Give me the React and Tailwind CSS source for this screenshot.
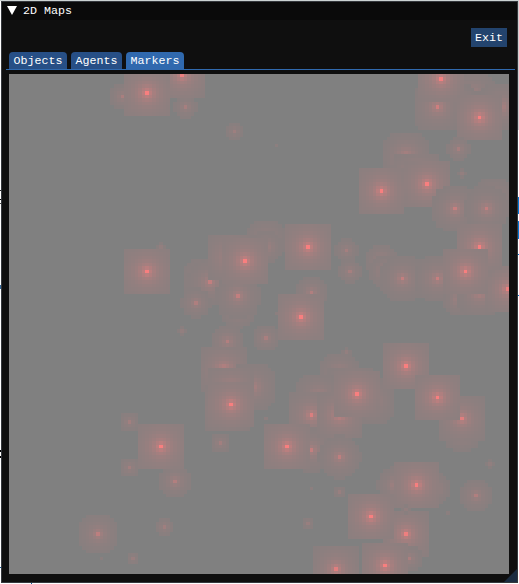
import React from "react";

const CELLS = 143;
const SIZE = 500;
const STEP = SIZE / CELLS;
const REACH = 6;
const THRESHOLD = 0.066;

// Each marker is [x, y, strength]; later markers overwrite earlier ones.
const MARKERS = [
  [113, 22, 0.34], [177, 33, 0.32], [225, 57, 0.24], [267, 72, 0.1], [173, 2, 0.9],
  [138, 19, 1],
  [455, 2, 0.55], [462, 22, 0.62], [492, 32, 0.6], [449, 30, 0.5], [428.5, 33, 0.65], [432, 5, 0.95], [470.5, 43.5, 1],
  [449.5, 75, 0.32], [453, 101, 0.16],
  [397, 82, 0.62], [407, 103, 0.8], [372.5, 117, 1], [418, 110, 1],
  [485, 125, 0.5], [446, 134.5, 0.58], [477.5, 134.5, 0.55],
  [338, 177, 0.3], [341, 197, 0.32], [371, 188, 0.42], [375, 197, 0.42], [393.5, 204.5, 0.56], [428.5, 204.5, 0.58],
  [450, 227, 0.4], [469, 219, 0.62], [498, 215, 0.9], [470.5, 172, 1], [456.5, 197.5, 1],
  [152, 173, 0.15], [138, 197, 1],
  [256, 165, 0.5], [258, 172, 0.42], [194, 204, 0.5], [201, 207, 0.55], [187, 229, 0.38],
  [229, 235, 0.45], [229, 222, 0.55], [221, 184, 0.8], [236, 187, 1],
  [299, 173, 1], [303, 218, 0.4], [292, 243, 1],
  [268, 239, 0.1], [173, 257, 0.15], [218, 267.5, 0.42], [257, 264, 0.34],
  [215, 295, 0.8], [243, 313, 0.6], [222, 317, 0.85], [219, 333, 0.8], [222, 330.5, 1],
  [256, 344, 0.12], [211, 369, 0.28],
  [337, 278, 0.16], [331, 300, 0.5], [340, 318, 0.75], [362, 326, 0.6],
  [308, 325, 0.6], [302.5, 341, 0.75], [302.5, 375, 0.55], [331, 340, 0.85], [330.5, 383, 0.52],
  [278, 372.5, 1], [348, 320, 1],
  [397, 292, 1], [453, 358, 0.48], [453, 344.5, 0.8], [428.5, 323.5, 1],
  [481, 390, 0.14],
  [120, 347, 0.28], [120.5, 393.5, 0.28], [166, 407.5, 0.42], [155, 453, 0.26], [89, 460, 0.5], [124, 484, 0.2], [92, 484, 0.08],
  [152, 372.5, 1],
  [331, 417, 0.2], [302, 414, 0.1], [299, 449.5, 0.2], [439, 439, 0.09],
  [388, 411, 0.45], [425, 414, 0.42], [467, 421, 0.4], [407.5, 411, 1],
  [397, 460, 0.92], [396, 436, 0.15], [362, 442.5, 1], [401, 486, 0.35], [327, 495, 0.8], [376, 491.5, 1],
];

function buildField() {
  const field = new Float32Array(CELLS * CELLS);
  for (const [x, y, strength] of MARKERS) {
    const cx = Math.floor(x / STEP);
    const cy = Math.floor(y / STEP);
    for (let dy = -REACH; dy <= REACH; dy++) {
      for (let dx = -REACH; dx <= REACH; dx++) {
        const px = cx + dx;
        const py = cy + dy;
        if (px < 0 || py < 0 || px >= CELLS || py >= CELLS) continue;
        const value = strength / (1 + 1.1 * Math.hypot(dx, dy));
        if (value > THRESHOLD) field[py * CELLS + px] = value;
      }
    }
  }
  return field;
}

const FIELD = buildField();

function MarkerMap() {
  const cells = [];
  for (let y = 0; y < CELLS; y++) {
    for (let x = 0; x < CELLS; x++) {
      const value = FIELD[y * CELLS + x];
      if (!value) continue;
      const left = Math.round(x * STEP);
      const top = Math.round(y * STEP);
      cells.push(
        <rect
          key={y * CELLS + x}
          x={left}
          y={top}
          width={Math.round((x + 1) * STEP) - left}
          height={Math.round((y + 1) * STEP) - top}
          fill={`rgb(${Math.round(128 + 120 * value)},127,127)`}
        />
      );
    }
  }
  return (
    <svg width="500" height="500" viewBox="0 0 500 500" shapeRendering="crispEdges" className="block bg-[#808080]">
      {cells}
    </svg>
  );
}

function Tab({ label, width, active }) {
  return (
    <div className={`flex h-[17px] items-center rounded-t-[4px] pt-[2px] pl-[4.5px] ${width} ${active ? "bg-[#3069ae]" : "bg-[#274f86]"}`}>
      {label}
    </div>
  );
}

function LeftEdge() {
  return (
    <div className="flex w-px shrink-0 flex-col">
      <div className="mt-[189px] h-px bg-[#222]" />
      <div className="mt-2 h-px bg-black" />
      <div className="mt-[3px] h-px bg-[#444]" />
      <div className="mt-[81px] h-1 bg-[#34699b]" />
      <div className="mt-[161px] h-[2px] bg-black" />
      <div className="mt-1 h-[2px] bg-black" />
      <div className="mt-[109px] h-px bg-[#0d5a9c]" />
    </div>
  );
}

function RightEdge() {
  return (
    <div className="flex w-px shrink-0 flex-col">
      <div className="h-[129px] bg-[#d0d0d0]" />
      <div className="mt-[67px] h-[17px] bg-[#0078d7]" />
      <div className="mt-[7px] h-[18px] bg-[#0078d7]" />
      <div className="mt-[15px] h-px bg-[#0078d7]" />
      <div className="mt-10 h-px bg-[#0078d7]" />
    </div>
  );
}

export default function App() {
  return (
    <div className="flex h-[584px] w-[519px] flex-col overflow-hidden bg-white font-['Liberation_Mono',monospace] text-[11.67px] leading-[13px] whitespace-pre text-white">
      <div className="h-px shrink-0 bg-[#ccd3d3]" />
      <div className="flex h-[582px] shrink-0">
        <LeftEdge />
        <div className="relative flex h-[582px] w-[517px] flex-col border border-[#35383d] bg-[#0f0f0f]">
          <div className="flex h-[18px] shrink-0 items-center bg-[#0a0a0a] pl-[5px]">
            <svg width="10" height="9" viewBox="0 0 10 9" className="mr-[6px] mb-px">
              <path d="M0 0H10L5 9Z" fill="#fff" />
            </svg>
            <span className="pt-px">2D Maps</span>
          </div>
          <div className="mt-2 mr-[10px] flex h-[19px] w-9 shrink-0 items-center justify-center self-end bg-[#23446e] pt-px">
            Exit
          </div>
          <div className="mt-[5px] mr-[2px] ml-1 flex shrink-0 gap-1 border-b border-[#3069ae] pl-[3px]">
            <Tab label="Objects" width="w-[58px]" />
            <Tab label="Agents" width="w-[51px]" />
            <Tab label="Markers" width="w-[58px]" active />
          </div>
          <div className="mt-1 ml-[7px]">
            <MarkerMap />
          </div>
          <svg width="13" height="13" viewBox="0 0 13 13" className="absolute right-0 bottom-0">
            <path d="M13 0V13H0Z" fill="#1b2c40" />
          </svg>
        </div>
        <RightEdge />
      </div>
      <div className="h-px w-px shrink-0 translate-x-[31px] bg-[#0d5a9c]" />
    </div>
  );
}
